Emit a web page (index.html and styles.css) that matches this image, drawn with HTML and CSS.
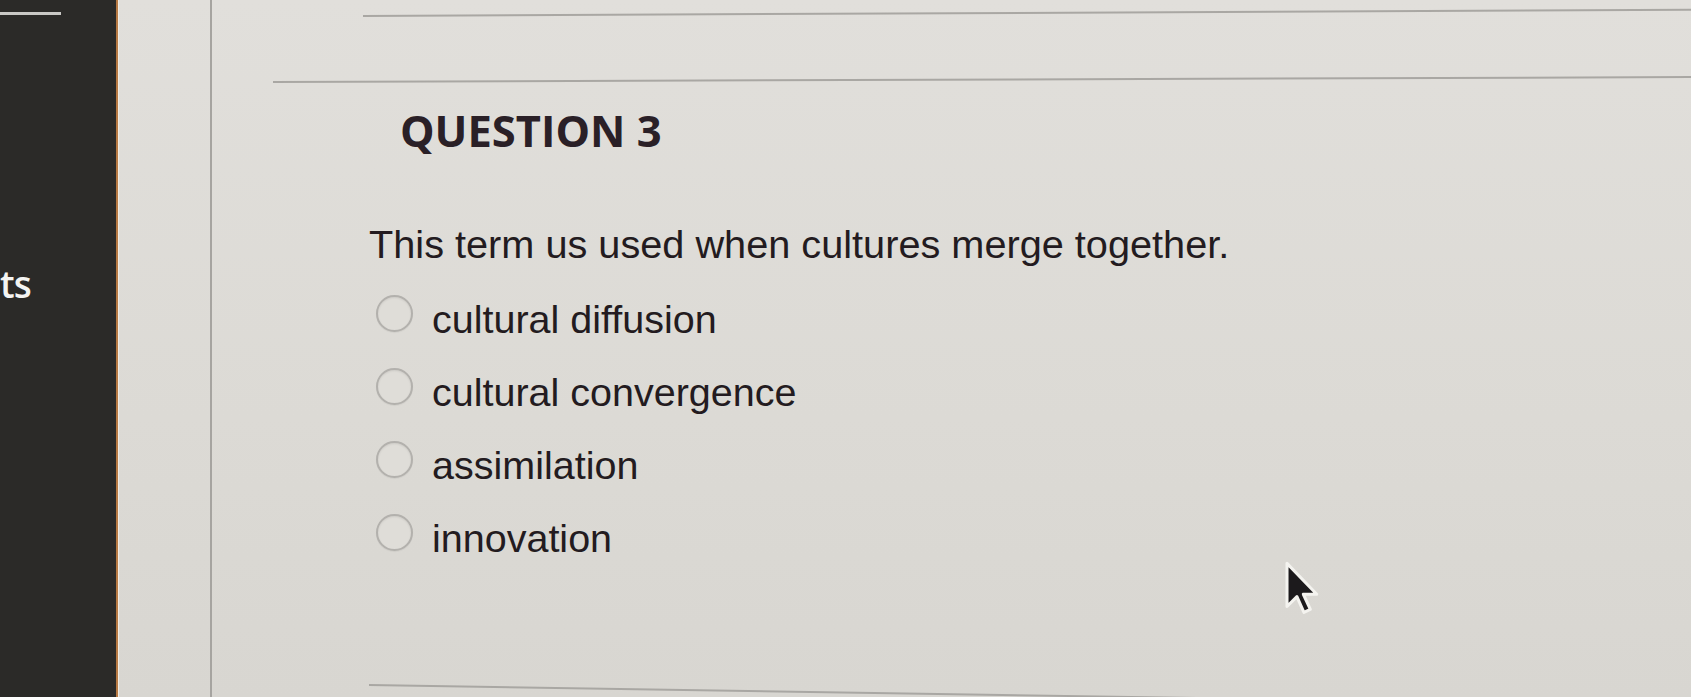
FILE: index.html
```html
<!DOCTYPE html>
<html lang="en">
<head>
<meta charset="utf-8">
<title>Question 3</title>
<link rel="stylesheet" href="styles.css">
</head>
<body>
  <aside class="sidebar">
    <div class="sidebar-tab"></div>
    <div class="sidebar-label">ts</div>
  </aside>
  <div class="gutter"></div>
  <main class="main">
    <div class="rule rule-top"></div>
    <div class="rule rule-second"></div>
    <h2 class="question-title">QUESTION 3</h2>
    <p class="question-text">This term us used when cultures merge together.</p>
    <ul class="options">
      <li class="option"><span class="radio"></span><span class="option-label">cultural diffusion</span></li>
      <li class="option"><span class="radio"></span><span class="option-label">cultural convergence</span></li>
      <li class="option"><span class="radio"></span><span class="option-label">assimilation</span></li>
      <li class="option"><span class="radio"></span><span class="option-label">innovation</span></li>
    </ul>
    <div class="rule rule-bottom"></div>
  </main>
  <svg class="cursor" width="36" height="56" viewBox="0 0 30 48" aria-hidden="true">
    <path d="M3 2 L3 39 L11.5 30.5 L17.5 44 L23 41.5 L17 28.5 L28.5 28.5 Z" fill="#1c1a1c" stroke="#f4f3ef" stroke-width="2.6" stroke-linejoin="round"/>
  </svg>
</body>
</html>
```

FILE: styles.css
```css
html, body {
  margin: 0;
  padding: 0;
}

body {
  width: 1691px;
  height: 697px;
  overflow: hidden;
  display: flex;
  position: relative;
  background: linear-gradient(180deg, #e1dfdb 0%, #dcdad5 60%, #d8d6d1 100%);
  font-family: "Liberation Sans", Arial, sans-serif;
  color: #231b20;
}

.sidebar {
  width: 116px;
  flex: none;
  background: #2b2a28;
  border-right: 2px solid #b87a44;
  box-shadow: 1px 0 0 #f2ece2;
  display: flex;
  flex-direction: column;
  overflow: hidden;
}

.sidebar-tab {
  width: 61px;
  height: 3px;
  margin-top: 12px;
  background: #c9c8c5;
}

.sidebar-label {
  margin-top: 249px;
  margin-left: 0;
  font-family: "Open Sans", sans-serif;
  font-weight: 600;
  font-size: 37px;
  line-height: 40px;
  letter-spacing: -1px;
  color: #f4f4f2;
}

.gutter {
  width: 92px;
  flex: none;
  border-right: 2px solid #a6a4a0;
}

.main {
  flex: 1;
  display: flex;
  flex-direction: column;
  min-width: 0;
}

.rule {
  height: 2px;
  background: #a9a7a3;
  transform-origin: left center;
}

.rule-top {
  margin-top: 15px;
  margin-left: 151px;
  transform: rotate(-0.27deg);
}

.rule-second {
  margin-top: 64px;
  margin-left: 61px;
  transform: rotate(-0.2deg);
}

.question-title {
  margin: 26px 0 0 188px;
  font-family: "Open Sans", sans-serif;
  font-weight: 700;
  font-size: 43.5px;
  line-height: 44px;
  color: #2a2027;
}

.question-text {
  margin: 67px 0 0 157px;
  font-size: 39.7px;
  line-height: 48px;
}

.options {
  list-style: none;
  margin: 27px 0 0 164px;
  padding: 0;
  display: flex;
  flex-direction: column;
  gap: 25px;
}

.option {
  display: flex;
  align-items: flex-start;
  gap: 19px;
  height: 48px;
}

.radio {
  width: 33px;
  height: 33px;
  flex: none;
  border-radius: 50%;
  border: 2px solid #b3b1ad;
  background: #dfddd8;
  box-shadow: inset 0 1px 2px rgba(0, 0, 0, 0.08), 0 1px 1px rgba(0, 0, 0, 0.05);
}

.option-label {
  font-size: 39.5px;
  line-height: 48px;
}

.rule-bottom {
  margin-top: 122px;
  margin-left: 157px;
  width: 1000px;
  transform: rotate(0.9deg);
}

.cursor {
  position: absolute;
  left: 1283px;
  top: 561px;
}
```
